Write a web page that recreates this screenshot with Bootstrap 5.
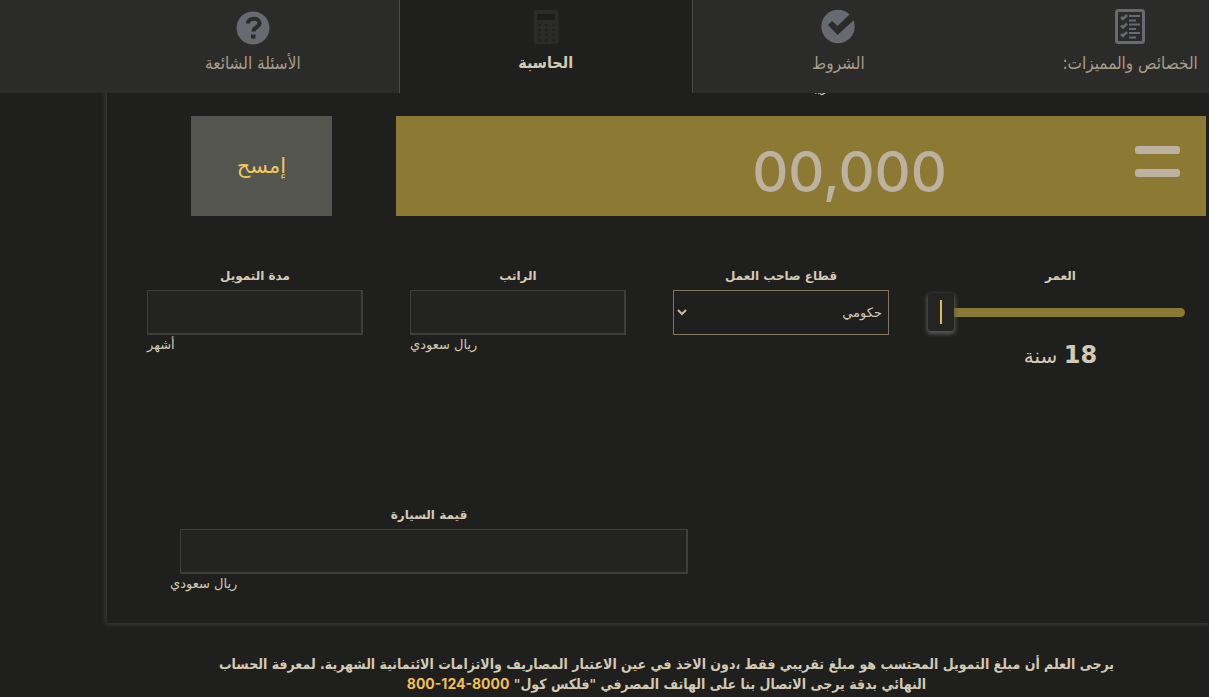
<!DOCTYPE html>
<html lang="ar" dir="rtl">
<head>
<meta charset="utf-8">
<meta name="viewport" content="width=device-width, initial-scale=1">
<title>الحاسبة</title>
<link href="https://cdn.jsdelivr.net/npm/bootstrap@5.3.0/dist/css/bootstrap.min.css" rel="stylesheet">
<style>
body{background:#1f1f1d;color:#d3cab6;font-family:"DejaVu Sans",sans-serif;font-size:12px;line-height:20px}
.topbar{background:#2b2b2a;height:93px;z-index:10}
.tabs-row{margin-right:-67px;margin-left:107px}
.tab-link{flex:1 1 0;color:#a89d8a;font-family:"DejaVu Sans Condensed","DejaVu Sans",sans-serif;font-size:17px;line-height:24px;padding-top:8px;text-decoration:none}
.tab-link svg{display:block;margin:0 auto 5px}
.tab-link.active{background:#1f1f1d;color:#d3cab6;font-size:16px;font-weight:700;border:solid #4b4b49;border-width:0 1px}
.tab-link:hover{color:#d3cab6}
.calc{margin-left:107px;padding-top:78px;padding-bottom:29px;box-shadow:0 0 5px 1px #424240}
.result-title{padding-right:372px;height:38px}
.result-row{padding-right:3px;padding-left:84px;gap:64px}
.result{background:#8b7934;height:100px;color:#bdb2a0}
.amount{font-family:Inter,sans-serif;font-size:56px;line-height:100px;font-weight:500;padding-top:6px;width:285px;margin-right:214px;direction:ltr;text-align:center}
.equals{top:30px;right:26px;width:45px;height:31px}
.equals span{height:8px;border-radius:3px;background:#bdb2a0}
.clear-btn{width:141px;height:100px;background:#555550;color:#f2c75c;font-size:21px;border:0;border-radius:0}
.fields{padding:50px 24px 0 40px;gap:47px}
.field{flex:216 1 0}
.field.age{flex-grow:249}
.field label,.car label{font-weight:700;display:block;text-align:center;line-height:20px;margin-bottom:4px}
.form-control,.form-select{height:45px;border-radius:0;color:#d3cab6;font-size:13px}
.form-control,.form-control:focus{background:#232321;border:solid #3e3e3c;border-width:1px 2px 2px 1px}
.form-select{background:#1f1f1d url("data:image/svg+xml,%3Csvg xmlns='http://www.w3.org/2000/svg' viewBox='0 0 10 7'%3E%3Cpath d='M1 1l4 4 4-4' fill='none' stroke='%23c4bba8' stroke-width='2'/%3E%3C/svg%3E") no-repeat 3px 18px/10px 7px;border:1px solid #80755f;padding:0 6px 0 20px}
.unit{text-align:left;font-size:13px}
.age-range{display:block;width:calc(100% + 8px);height:45px;margin:0 0 0 -8px;background:none;appearance:none;direction:ltr}
.age-range::-webkit-slider-runnable-track{height:9px;border-radius:5px;background:#8b7934}
.age-range::-webkit-slider-thumb{appearance:none;width:26px;height:38px;margin-top:-15px;border-radius:3px;background:linear-gradient(#d8bc62,#d8bc62) center/2px 24px no-repeat #242423;box-shadow:0 2px 4px 1px #5a5a58}
.age-value{font-size:20px;line-height:28px;margin-top:6px}
.age-value b{font-size:24px}
.car{margin-right:521px;margin-left:63px;padding-top:135px}
.car .form-control{margin-left:10px;width:calc(100% - 10px)}
.note-wrap{padding:31px 0 0 124px}
.note{font-family:"DejaVu Sans Condensed","DejaVu Sans",sans-serif;font-weight:700;font-size:14px;line-height:20px}
.note a{color:#f0bf58;text-decoration:none;font-family:Inter,sans-serif}
</style>
</head>
<body class="vh-100 overflow-hidden">
<nav class="topbar fixed-top overflow-hidden">
  <div class="tabs-row d-flex h-100">
    <a class="tab-link text-center" href="#features">
      <svg width="38" height="38" viewBox="0 0 38 38"><rect x="5.500" y="2.500" width="27" height="32" rx="2" fill="none" stroke="#676a70" stroke-width="3"/><g fill="none" stroke="#676a70" stroke-width="2"><path d="M10 9l2 2 4-4M10 17.500l2 2 4-4M10 26l2 2 4-4" stroke-width="2.500"/><path d="M18 8h11M18 12.500h7M18 16.500h11M18 21h7M18 25h11M18 29.500h7"/></g></svg>
      الخصائص والمميزات:</a>
    <a class="tab-link text-center" href="#terms">
      <svg width="38" height="38" viewBox="0 0 38 38"><circle cx="19" cy="18.500" r="16.700" fill="#676a70"/><path d="M9 17l4-4 5.500 5L31 6l5 5-17.500 16z" fill="#2b2b2a"/></svg>
      الشروط</a>
    <a class="tab-link text-center active" href="#calculator">
      <svg width="38" height="38" viewBox="0 0 38 38"><rect x="6.500" y="2" width="25" height="34" rx="3" fill="#2b2b2a"/><rect x="10" y="6" width="18" height="6" rx="1" fill="#1d1d1c"/><path d="M11 17h17M11 22h17M11 27h17M11 32h17" stroke="#222220" stroke-width="2.500" stroke-dasharray="3 4"/></svg>
      الحاسبة</a>
    <a class="tab-link text-center" href="#faq">
      <svg width="38" height="38" viewBox="0 0 38 38"><circle cx="19" cy="20" r="16.500" fill="#676a70"/><path d="M14 15.500c0-6.500 11.500-6 11.500-.5 0 4.500-6 4-6 8.500" fill="none" stroke="#2b2b2a" stroke-width="4"/><rect x="17" y="26.500" width="4.500" height="4" fill="#2b2b2a"/></svg>
      الأسئلة الشائعة</a>
  </div>
</nav>
<main>
  <section class="calc">
    <div class="result-title">تقريبا</div>
    <div class="result-row d-flex">
      <div class="result flex-grow-1 position-relative">
        <div class="equals position-absolute d-flex flex-column justify-content-between"><span></span><span></span></div>
        <div class="amount">00,000</div>
      </div>
      <button class="clear-btn" type="button">إمسح</button>
    </div>
    <div class="fields d-flex">
      <div class="field age">
        <label for="age">العمر</label>
        <input class="age-range" type="range" id="age" min="18" max="60" value="18">
        <div class="age-value text-center"><b>18</b> سنة</div>
      </div>
      <div class="field">
        <label for="sector">قطاع صاحب العمل</label>
        <select class="form-select" id="sector"><option>حكومي</option></select>
      </div>
      <div class="field">
        <label for="salary">الراتب</label>
        <input class="form-control" id="salary" type="text">
        <div class="unit">ريال سعودي</div>
      </div>
      <div class="field">
        <label for="term">مدة التمويل</label>
        <input class="form-control" id="term" type="text">
        <div class="unit">أشهر</div>
      </div>
    </div>
    <div class="car">
      <label for="car">قيمة السيارة</label>
      <input class="form-control" id="car" type="text">
      <div class="unit">ريال سعودي</div>
    </div>
  </section>
  <div class="note-wrap">
    <p class="note text-center mb-0">يرجى العلم أن مبلغ التمويل المحتسب هو مبلغ تقريبي فقط ،دون الاخذ في عين الاعتبار المصاريف والاتزامات الائتمانية الشهرية. لمعرفة الحساب<br>النهائي بدقة يرجى الاتصال بنا على الهاتف المصرفي "فلكس كول" <a href="tel:8001248000" dir="ltr">800-124-8000</a></p>
  </div>
</main>
<script src="https://cdn.jsdelivr.net/npm/bootstrap@5.3.0/dist/js/bootstrap.bundle.min.js"></script>
</body>
</html>
